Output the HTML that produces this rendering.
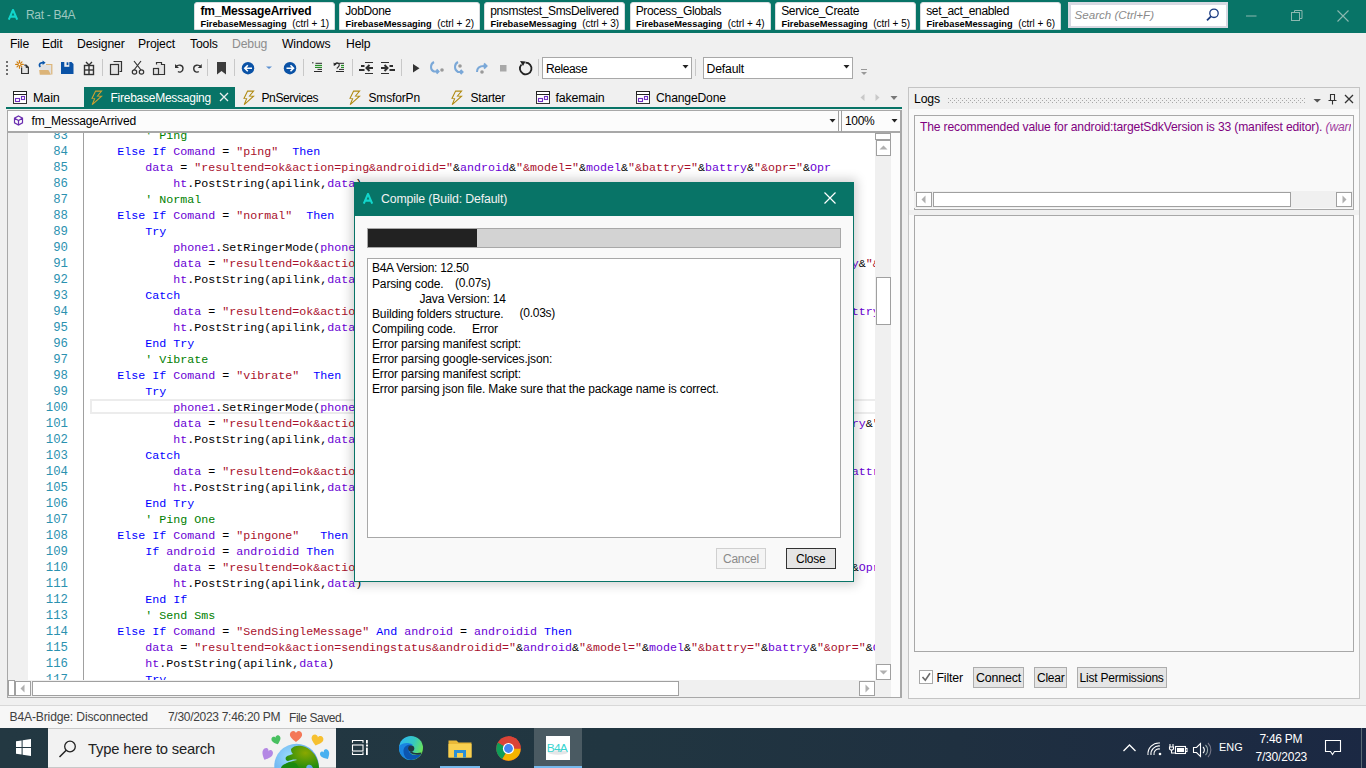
<!DOCTYPE html>
<html><head><meta charset="utf-8">
<style>
*{margin:0;padding:0;box-sizing:border-box}
html,body{width:1366px;height:768px;overflow:hidden;background:#f0f0f0;font-family:"Liberation Sans",sans-serif;font-size:11.6px;color:#000}
.a{position:absolute}
.t{position:absolute;white-space:pre;line-height:1}
#title{left:0;top:0;width:1366px;height:33px;background:#087467}
.ftab{position:absolute;top:2px;height:28px;background:#fff;border-radius:3px 3px 0 0;border:1px solid #d9dde0}
.ftab .l1{position:absolute;left:5.2px;top:2.3px;font-size:12px;letter-spacing:-0.35px;white-space:pre;line-height:1}
.ftab .l2{position:absolute;left:5.6px;top:15.7px;font-size:10px;white-space:pre;line-height:1}
.menu{position:absolute;top:38px;font-size:12.21px;letter-spacing:-0.155px;white-space:pre;line-height:1}
.sep{position:absolute;width:1px;background:#c8c8c8}
.dtab{position:absolute;top:91.9px;font-size:11.7px;white-space:pre;line-height:1}
.code{position:absolute;left:84px;top:133px;width:791px;height:547px;overflow:hidden;background:#fff}
.cl{position:absolute;left:5.3px;white-space:pre;font-family:"Liberation Mono",monospace;font-size:11.67px;line-height:16px;height:16px}
.ln{position:absolute;right:1px;width:40px;text-align:right;font-family:"Liberation Mono",monospace;font-size:12.3px;line-height:16px;color:#2b91af}
.k{color:#0000ff}.v{color:#6a00d4}.s{color:#a8102c}.c{color:#008000}
.sb{position:absolute;background:#fff;border:1px solid #a0a0a0}
</style></head><body>
<!-- TITLE BAR -->
<div id="title" class="a">
  <svg class="a" style="left:7px;top:9px" width="12" height="12"><path d="M1.8 10.6L6 0.9L10.2 10.6M3.3 7.6h5.4" fill="none" stroke="#12d6cc" stroke-width="2.1" stroke-linejoin="round"/></svg>
  <div class="t" style="left:26px;top:9px;font-size:12.0px;color:#9ec8c0;letter-spacing:-0.3px">Rat - B4A</div>
  <div class="ftab" style="left:194px;width:141px"><div class="l1" style="font-weight:700;font-size:12px;left:5.5px;top:1.9px;letter-spacing:-0.19px">fm_MessageArrived</div><div class="l2"><b style="font-size:9.27px">FirebaseMessaging</b>  (ctrl + 1)</div></div>
  <div class="ftab" style="left:339px;width:141px"><div class="l1">JobDone</div><div class="l2"><b style="font-size:9.27px">FirebaseMessaging</b>  (ctrl + 2)</div></div>
  <div class="ftab" style="left:484px;width:141px"><div class="l1">pnsmstest_SmsDelivered</div><div class="l2"><b style="font-size:9.27px">FirebaseMessaging</b>  (ctrl + 3)</div></div>
  <div class="ftab" style="left:629.5px;width:141px"><div class="l1">Process_Globals</div><div class="l2"><b style="font-size:9.27px">FirebaseMessaging</b>  (ctrl + 4)</div></div>
  <div class="ftab" style="left:775px;width:141px"><div class="l1">Service_Create</div><div class="l2"><b style="font-size:9.27px">FirebaseMessaging</b>  (ctrl + 5)</div></div>
  <div class="ftab" style="left:920px;width:141px"><div class="l1">set_act_enabled</div><div class="l2"><b style="font-size:9.27px">FirebaseMessaging</b>  (ctrl + 6)</div></div>
  <div class="a" style="left:1068px;top:2px;width:160px;height:26px;background:#fff;border:2px solid #d8d9e2;border-top-width:3px;border-left-width:3px"></div>
  <div class="t" style="left:1074.5px;top:8.88px;font-size:11.6px;font-style:italic;color:#8a8a8a">Search (Ctrl+F)</div>
</div>

<!-- MENU -->
<div class="menu" style="left:10px">File</div>
<div class="menu" style="left:42px">Edit</div>
<div class="menu" style="left:77px">Designer</div>
<div class="menu" style="left:138px">Project</div>
<div class="menu" style="left:190px">Tools</div>
<div class="menu" style="left:232px;color:#8d8d8d">Debug</div>
<div class="menu" style="left:282px">Windows</div>
<div class="menu" style="left:346px">Help</div>
<!-- TOOLBAR -->
<svg class="a" style="left:0;top:54px" width="540" height="30" viewBox="0 54 540 30">
  <g fill="#707070"><rect x="6" y="61" width="2" height="2"/><rect x="6" y="65" width="2" height="2"/><rect x="6" y="69" width="2" height="2"/><rect x="6" y="73" width="2" height="2"/></g>
  <!-- new -->
  <g stroke="#d07f10" stroke-width="1.2" stroke-linecap="round"><line x1="19.5" y1="60.6" x2="19.5" y2="68.2"/><line x1="15.7" y1="64.4" x2="23.3" y2="64.4"/><line x1="17" y1="61.9" x2="22" y2="66.9"/><line x1="22" y1="61.9" x2="17" y2="66.9"/></g>
  <circle cx="19.5" cy="64.4" r="1.3" fill="#fff" stroke="#d07f10" stroke-width="0.9"/>
  <path d="M21.6 67.5v6h6.8v-6.2l-2.3-2.2h-1.8" fill="#e4e4e4" stroke="#333" stroke-width="1.2"/>
  <path d="M26 65.2v2.3h2.3" fill="#333" stroke="#333" stroke-width="0.8"/>
  <!-- open -->
  <rect x="40" y="64.5" width="11.8" height="10" fill="#e2e2e2"/>
  <path d="M46 64.5h5.8v10" fill="none" stroke="#ddb578" stroke-width="1.2"/>
  <path d="M39.2 70h9.2l2.6 4.8h-11.2z" fill="#dcb478"/>
  <path d="M40.3 67c-1.5-1.5-1-3.8 1.2-4.2l2-0.2" fill="none" stroke="#0a56aa" stroke-width="1.7"/>
  <path d="M42.6 60.6l3 2.2-3 2.2z" fill="#0a56aa"/>
  <!-- save -->
  <path d="M61 62h10.5l2 2v10h-12.5z" fill="#0a52a6"/><rect x="64.3" y="62" width="5" height="4.8" fill="#f0f0f0"/><rect x="66.6" y="62.3" width="1.8" height="2.8" fill="#0a52a6"/>
  <!-- gift -->
  <g fill="none" stroke="#333" stroke-width="1.4"><rect x="84.5" y="65.5" width="9" height="9"/><line x1="89" y1="65" x2="89" y2="75"/><line x1="84" y1="70" x2="94" y2="70"/><path d="M86 62l3 3 3-3"/></g>
  <rect x="102" y="59" width="1" height="17" fill="#c8c8c8"/>
  <!-- copy -->
  <g fill="#e4e4e4" stroke="#333" stroke-width="1.2"><path d="M113.5 61.5h8v10h-2"/><rect x="110.5" y="64.5" width="8" height="10"/></g>
  <!-- cut -->
  <g fill="none" stroke="#333" stroke-width="1.2"><path d="M134 61l7 9M141 61l-7 9"/><circle cx="134.5" cy="72" r="2.2"/><circle cx="141.5" cy="72" r="2.2"/></g>
  <!-- paste -->
  <g fill="#e4e4e4" stroke="#333" stroke-width="1.2"><path d="M156.5 64.5v-2h5v2h3v10h-6"/><rect x="153.5" y="68.5" width="5" height="6"/></g>
  <!-- undo redo -->
  <g fill="none" stroke="#333" stroke-width="1.4"><path d="M176 66.5c2-2 7-2 7 2s-4 4-5 3"/><path d="M200.75 66.5c-2-2 -7-2 -7 2s4 4 5 3"/></g>
  <path d="M175 64v4h4z" fill="#333"/><path d="M201.75 64v4h-4z" fill="#333"/>
  <rect x="207" y="59" width="1" height="17" fill="#c8c8c8"/>
  <path d="M217 62h9v12.5l-4.5-3.5-4.5 3.5z" fill="#3c3c3c"/>
  <rect x="234" y="59" width="1" height="17" fill="#c8c8c8"/>
  <circle cx="248" cy="68.2" r="6.2" fill="#0a52a6"/><path d="M245 68.2h7M247.8 65.2l-3 3 3 3" stroke="#fff" stroke-width="1.6" fill="none"/>
  <path d="M266 66.5h6l-3 2.5z" fill="#5b8fd0"/>
  <circle cx="290" cy="68.2" r="6.2" fill="#0a52a6"/><path d="M286.5 68.2h7M290.5 65.2l3 3-3 3" stroke="#fff" stroke-width="1.6" fill="none"/>
  <rect x="303" y="59" width="1" height="17" fill="#c8c8c8"/>
  <!-- comment -->
  <g stroke="#2a2a2a" stroke-width="1"><line x1="312" y1="62.8" x2="313.5" y2="62.8"/><line x1="315.5" y1="63.3" x2="322" y2="63.3"/><line x1="317.5" y1="69.4" x2="322" y2="69.4"/><line x1="314" y1="71.5" x2="322" y2="71.5"/>
  <line x1="336" y1="63.3" x2="344" y2="63.3"/><line x1="339" y1="69.4" x2="344" y2="69.4"/><line x1="336" y1="71.5" x2="344" y2="71.5"/></g>
  <g stroke="#1c8a1c" stroke-width="1.1"><line x1="315" y1="65.4" x2="322" y2="65.4"/><line x1="315" y1="67.4" x2="322" y2="67.4"/><line x1="341" y1="65.4" x2="344" y2="65.4"/><line x1="341" y1="67.4" x2="344" y2="67.4"/></g>
  <path d="M334.8 64.2c1.5-2 4.5-1.5 4.5 0.8 0 1.5-1.5 2.5-2.5 3.5" fill="none" stroke="#2a2a2a" stroke-width="1.2"/><path d="M333.5 62.5l0.3 3.5 2.8-1.6z" fill="#2a2a2a"/>
  <rect x="352" y="59" width="1" height="17" fill="#c8c8c8"/>
  <!-- outdent/indent -->
  <g stroke="#2f2f2f" stroke-width="1"><line x1="365" y1="62.5" x2="373" y2="62.5"/><line x1="365" y1="73.5" x2="373" y2="73.5"/><line x1="381" y1="62.5" x2="389" y2="62.5"/><line x1="381" y1="73.5" x2="389" y2="73.5"/></g>
  <g stroke="#2f2f2f" stroke-width="2"><line x1="361" y1="66" x2="364.5" y2="66"/><line x1="359" y1="70" x2="364.5" y2="70"/><line x1="389.5" y1="66" x2="393" y2="66"/><line x1="389.5" y1="70" x2="395" y2="70"/>
  <path d="M373 68h-6M369.5 65l-3 3 3 3" fill="none"/><path d="M381 68h6M384.5 65l3 3-3 3" fill="none"/></g>
  <rect x="401" y="59" width="1" height="17" fill="#c8c8c8"/>
  <path d="M413 64v8.5l6.5-4.25z" fill="#333"/>
  <g stroke="#7aa8d8" stroke-width="2" fill="none"><path d="M434 62c-4 2-4 8 0 9.5h4"/><path d="M436.5 69.5l2 2-2 2"/><path d="M458 62c-4 2-4 8 0 10h4"/><path d="M460.5 70l2 2-2 2"/><path d="M477 72c0-4 2-6 7-6h2"/><path d="M484 63.5l2.5 2.5-2.5 2.5"/></g>
  <g fill="#9a9a9a"><circle cx="442" cy="70" r="1.8"/><circle cx="460" cy="66" r="1.8"/><circle cx="482" cy="72" r="1.8"/></g>
  <rect x="500" y="65" width="6.5" height="6.5" fill="#a8a8a8"/>
  <g fill="none" stroke="#222" stroke-width="1.8"><path d="M521.5 64.5a5.8 5.8 0 1 0 4-1.8"/></g><path d="M520 61l5.5 0.5-2.5 4.5z" fill="#222"/>
  <rect x="538" y="59" width="1" height="17" fill="#c8c8c8"/>
</svg>
<div class="a" style="left:542px;top:57px;width:150px;height:22px;background:#fff;border:1px solid #a8a8a8"></div>
<div class="t" style="left:546px;top:63px;font-size:12.0px;letter-spacing:-0.4px">Release</div>
<svg class="a" style="left:682px;top:65px" width="7" height="4"><path d="M0.5 0h6l-3 3.5z" fill="#222"/></svg>
<div class="sep" style="left:695px;top:59px;height:17px"></div>
<div class="a" style="left:703px;top:57px;width:150px;height:22px;background:#fff;border:1px solid #a8a8a8"></div>
<div class="t" style="left:706.5px;top:63px;font-size:12.21px;letter-spacing:-0.155px">Default</div>
<svg class="a" style="left:843px;top:65px" width="7" height="4"><path d="M0.5 0h6l-3 3.5z" fill="#222"/></svg>
<svg class="a" style="left:860px;top:68px" width="8" height="9"><rect x="1" y="1" width="6" height="1" fill="#999"/><path d="M1 4h6l-3 3z" fill="#999"/></svg>

<!-- DOC TABS -->
<svg class="a" style="left:0;top:84px" width="910" height="26" viewBox="0 84 910 26">
  <rect x="84" y="87" width="151" height="20" fill="#087467"/>
  <rect x="6" y="107" width="896" height="2" fill="#087467"/>
  <g transform="translate(0,0)"><rect x="13.5" y="91.5" width="13" height="12" fill="#fff" stroke="#333" stroke-width="1"/><rect x="13.5" y="91.5" width="13" height="3" fill="#fff" stroke="#222" stroke-width="1"/><rect x="15.5" y="98.5" width="4" height="3" fill="none" stroke="#7030c0" stroke-width="1.1"/><rect x="21.5" y="96.5" width="3" height="3" fill="none" stroke="#7030c0" stroke-width="1.1"/></g><g transform="translate(523,0)"><rect x="13.5" y="91.5" width="13" height="12" fill="#fff" stroke="#333" stroke-width="1"/><rect x="13.5" y="91.5" width="13" height="3" fill="#fff" stroke="#222" stroke-width="1"/><rect x="15.5" y="98.5" width="4" height="3" fill="none" stroke="#7030c0" stroke-width="1.1"/><rect x="21.5" y="96.5" width="3" height="3" fill="none" stroke="#7030c0" stroke-width="1.1"/></g><g transform="translate(623,0)"><rect x="13.5" y="91.5" width="13" height="12" fill="#fff" stroke="#333" stroke-width="1"/><rect x="13.5" y="91.5" width="13" height="3" fill="#fff" stroke="#222" stroke-width="1"/><rect x="15.5" y="98.5" width="4" height="3" fill="none" stroke="#7030c0" stroke-width="1.1"/><rect x="21.5" y="96.5" width="3" height="3" fill="none" stroke="#7030c0" stroke-width="1.1"/></g>
  <g fill="none" stroke="#b08a10" stroke-width="1.05" stroke-linejoin="miter">
    <path transform="translate(86,86)" d="M9.6 5.1L15.6 5.1L11.5 10L15.6 10.2L6.2 18.6L8.6 12.6L6 12.4Z" stroke="#d0a030"/>
    <path transform="translate(238,86)" d="M9.6 5.1L15.6 5.1L11.5 10L15.6 10.2L6.2 18.6L8.6 12.6L6 12.4Z"/>
    <path transform="translate(344,86)" d="M9.6 5.1L15.6 5.1L11.5 10L15.6 10.2L6.2 18.6L8.6 12.6L6 12.4Z"/>
    <path transform="translate(446,86)" d="M9.6 5.1L15.6 5.1L11.5 10L15.6 10.2L6.2 18.6L8.6 12.6L6 12.4Z"/>
  </g>
  <path d="M220 93l8 8M228 93l-8 8" stroke="#e8f0ee" stroke-width="1.3"/>
  <path d="M860.5 97.5l4-3.5v7z" fill="#c8c8c8"/><path d="M879.5 97.5l-4-3.5v7z" fill="#c8c8c8"/>
  <path d="M890.5 96h7l-3.5 4z" fill="#777"/>
</svg>
<div class="dtab" style="left:33px;font-size:12.62px;top:92px;letter-spacing:-0.16px">Main</div>
<div class="dtab" style="left:110.5px;font-size:12.0px;top:92px;color:#fff;letter-spacing:-0.25px">FirebaseMessaging</div>
<div class="dtab" style="left:261.5px;font-size:12.0px;top:92px;letter-spacing:-0.4px">PnServices</div>
<div class="dtab" style="left:368.5px;font-size:12.0px;top:92px;letter-spacing:-0.15px">SmsforPn</div>
<div class="dtab" style="left:470.5px;font-size:12.0px;top:92px;letter-spacing:-0.2px">Starter</div>
<div class="dtab" style="left:555.5px;font-size:12.41px;top:92px;letter-spacing:-0.155px">fakemain</div>
<div class="dtab" style="left:656px;font-size:12.11px;top:92px;letter-spacing:-0.155px">ChangeDone</div>
<!-- CODE PANEL -->
<div class="a" style="left:7px;top:110px;width:895px;height:588px;border:1px solid #a8a8a8;border-width:1px 2px 1px 1px;background:#fcfcfc"></div>
<div class="a" style="left:8px;top:111px;width:831px;height:21px;background:#fcfcfc;border-right:1px solid #a0a0a0"></div>
<div class="a" style="left:8px;top:131px;width:893px;height:2px;background:#a8a8a8"></div>
<svg class="a" style="left:13px;top:115px" width="11" height="11"><path d="M5.5 1l4 2.2v4.6l-4 2.2-4-2.2V3.2z M1.5 3.2l4 2.3 4-2.3 M5.5 5.5v4.5" fill="none" stroke="#6b2fb0" stroke-width="1.2"/></svg>
<div class="t" style="left:31.5px;top:115px;font-size:12.05px;letter-spacing:-0.155px">fm_MessageArrived</div>
<svg class="a" style="left:829px;top:119px" width="8" height="4"><path d="M0.5 0h6l-3 3.5z" fill="#222"/></svg>
<div class="a" style="left:841px;top:110px;width:1px;height:22px;background:#a0a0a0"></div>
<div class="t" style="left:845px;top:115px;font-size:12.0px;letter-spacing:-0.35px">100%</div>
<svg class="a" style="left:891px;top:119px" width="8" height="4"><path d="M0.5 0h6l-3 3.5z" fill="#222"/></svg>
<div class="a" style="left:8px;top:133px;width:20px;height:547px;background:#f0f0f0"></div>
<div class="a" style="left:28px;top:133px;width:56px;height:547px;background:#fff"></div>
<div class="a" style="left:83px;top:133px;width:1px;height:547px;background:#a0a0a0"></div>
<!-- v scroll -->
<div class="a" style="left:875px;top:133px;width:16px;height:547px;background:#f0f0f0"></div>
<div class="sb" style="left:875px;top:133px;width:16px;height:7px"></div>
<div class="sb" style="left:876px;top:140px;width:15px;height:16px"></div>
<svg class="a" style="left:879px;top:145px" width="9" height="5"><path d="M0.5 4.5l4-4 4 4z" fill="#b0b0b0"/></svg>
<div class="sb" style="left:876px;top:277px;width:15px;height:48px"></div>
<div class="sb" style="left:876px;top:664px;width:15px;height:16px"></div>
<svg class="a" style="left:879px;top:670px" width="9" height="5"><path d="M0.5 0.5l4 4 4-4z" fill="#b0b0b0"/></svg>
<!-- h scroll -->
<div class="a" style="left:8px;top:680px;width:883px;height:17px;background:#f0f0f0"></div>
<div class="sb" style="left:8px;top:680px;width:7px;height:16px"></div>
<div class="sb" style="left:15px;top:681px;width:16px;height:15px"></div>
<svg class="a" style="left:20px;top:684px" width="5" height="9"><path d="M4.5 0.5l-4 4 4 4z" fill="#b0b0b0"/></svg>
<div class="sb" style="left:32px;top:681px;width:647px;height:15px"></div>
<div class="sb" style="left:859px;top:681px;width:16px;height:15px"></div>
<svg class="a" style="left:865px;top:684px" width="5" height="9"><path d="M0.5 0.5l4 4-4 4z" fill="#b0b0b0"/></svg>
<!-- CODE -->
<div class="code">
<div class="a" style="left:5.5px;top:266px;width:786px;height:15px;border:2px solid #ececec;border-right:none"></div>
<div class="cl" style="top:-5px">        <span class="c">&#x27; Ping</span></div>
<div class="cl" style="top:11px">    <span class="k">Else If</span> <span class="v">Comand</span> = <span class="s">&quot;ping&quot;</span>  <span class="k">Then</span></div>
<div class="cl" style="top:27px">        <span class="v">data</span> = <span class="s">&quot;resultend=ok&amp;action=ping&amp;androidid=&quot;</span>&amp;<span class="v">android</span>&amp;<span class="s">&quot;&amp;model=&quot;</span>&amp;<span class="v">model</span>&amp;<span class="s">&quot;&amp;battry=&quot;</span>&amp;<span class="v">battry</span>&amp;<span class="s">&quot;&amp;opr=&quot;</span>&amp;<span class="v">Opr</span></div>
<div class="cl" style="top:43px">            <span class="v">ht</span>.PostString(apilink,<span class="v">data</span>)</div>
<div class="cl" style="top:59px">        <span class="c">&#x27; Normal</span></div>
<div class="cl" style="top:75px">    <span class="k">Else If</span> <span class="v">Comand</span> = <span class="s">&quot;normal&quot;</span>  <span class="k">Then</span></div>
<div class="cl" style="top:91px">        <span class="k">Try</span></div>
<div class="cl" style="top:107px">            <span class="v">phone1</span>.SetRingerMode(<span class="v">phone</span>1.RINGER_NORMAL)</div>
<div class="cl" style="top:123px">            <span class="v">data</span> = <span class="s">&quot;resultend=ok&amp;action=normal&amp;ringer=ok&amp;androidid=&quot;</span>&amp;<span class="v">android</span>&amp;<span class="s">&quot;&amp;model=&quot;</span>&amp;<span class="v">model</span>&amp;<span class="s">&quot;&amp;battry=&quot;</span>&amp;<span class="v">battry</span>&amp;<span class="s">&quot;&amp;opr=&quot;</span>&amp;<span class="v">Opr</span></div>
<div class="cl" style="top:139px">            <span class="v">ht</span>.PostString(apilink,<span class="v">data</span>)</div>
<div class="cl" style="top:155px">        <span class="k">Catch</span></div>
<div class="cl" style="top:171px">            <span class="v">data</span> = <span class="s">&quot;resultend=ok&amp;action=normal&amp;ringer=error&amp;androidid=&quot;</span>&amp;<span class="v">android</span>&amp;<span class="s">&quot;&amp;model=&quot;</span>&amp;<span class="v">model</span>&amp;<span class="s">&quot;&amp;battry=&quot;</span>&amp;<span class="v">battry</span>&amp;<span class="s">&quot;&amp;opr=&quot;</span>&amp;<span class="v">Opr</span></div>
<div class="cl" style="top:187px">            <span class="v">ht</span>.PostString(apilink,<span class="v">data</span>)</div>
<div class="cl" style="top:203px">        <span class="k">End Try</span></div>
<div class="cl" style="top:219px">        <span class="c">&#x27; Vibrate</span></div>
<div class="cl" style="top:235px">    <span class="k">Else If</span> <span class="v">Comand</span> = <span class="s">&quot;vibrate&quot;</span>  <span class="k">Then</span></div>
<div class="cl" style="top:251px">        <span class="k">Try</span></div>
<div class="cl" style="top:267px">            <span class="v">phone1</span>.SetRingerMode(<span class="v">phone</span>1.RINGER_VIBRATE)</div>
<div class="cl" style="top:283px">            <span class="v">data</span> = <span class="s">&quot;resultend=ok&amp;action=vibrate&amp;ringer=ok&amp;androidid=&quot;</span>&amp;<span class="v">android</span>&amp;<span class="s">&quot;&amp;model=&quot;</span>&amp;<span class="v">model</span>&amp;<span class="s">&quot;&amp;battry=&quot;</span>&amp;<span class="v">battry</span>&amp;<span class="s">&quot;&amp;opr=&quot;</span>&amp;<span class="v">Opr</span></div>
<div class="cl" style="top:299px">            <span class="v">ht</span>.PostString(apilink,<span class="v">data</span>)</div>
<div class="cl" style="top:315px">        <span class="k">Catch</span></div>
<div class="cl" style="top:331px">            <span class="v">data</span> = <span class="s">&quot;resultend=ok&amp;action=vibrate&amp;ringer=error&amp;androidid=&quot;</span>&amp;<span class="v">android</span>&amp;<span class="s">&quot;&amp;model=&quot;</span>&amp;<span class="v">model</span>&amp;<span class="s">&quot;&amp;battry=&quot;</span>&amp;<span class="v">battry</span>&amp;<span class="s">&quot;&amp;opr=&quot;</span>&amp;<span class="v">Opr</span></div>
<div class="cl" style="top:347px">            <span class="v">ht</span>.PostString(apilink,<span class="v">data</span>)</div>
<div class="cl" style="top:363px">        <span class="k">End Try</span></div>
<div class="cl" style="top:379px">        <span class="c">&#x27; Ping One</span></div>
<div class="cl" style="top:395px">    <span class="k">Else If</span> <span class="v">Comand</span> = <span class="s">&quot;pingone&quot;</span>   <span class="k">Then</span></div>
<div class="cl" style="top:411px">        <span class="k">If</span> <span class="v">android</span> = <span class="v">androidid</span> <span class="k">Then</span></div>
<div class="cl" style="top:427px">            <span class="v">data</span> = <span class="s">&quot;resultend=ok&amp;action=pingone&amp;androidid=&quot;</span>&amp;<span class="v">android</span>&amp;<span class="s">&quot;&amp;model=&quot;</span>&amp;<span class="v">model</span>&amp;<span class="s">&quot;&amp;battry=&quot;</span>&amp;<span class="v">battry</span>&amp;<span class="s">&quot;&amp;opr=&quot;</span>&amp;<span class="v">Opr</span></div>
<div class="cl" style="top:443px">            <span class="v">ht</span>.PostString(apilink,<span class="v">data</span>)</div>
<div class="cl" style="top:459px">        <span class="k">End If</span></div>
<div class="cl" style="top:475px">        <span class="c">&#x27; Send Sms</span></div>
<div class="cl" style="top:491px">    <span class="k">Else If</span> <span class="v">Comand</span> = <span class="s">&quot;SendSingleMessage&quot;</span> <span class="k">And</span> <span class="v">android</span> = <span class="v">androidid</span> <span class="k">Then</span></div>
<div class="cl" style="top:507px">        <span class="v">data</span> = <span class="s">&quot;resultend=ok&amp;action=sendingstatus&amp;androidid=&quot;</span>&amp;<span class="v">android</span>&amp;<span class="s">&quot;&amp;model=&quot;</span>&amp;<span class="v">model</span>&amp;<span class="s">&quot;&amp;battry=&quot;</span>&amp;<span class="v">battry</span>&amp;<span class="s">&quot;&amp;opr=&quot;</span>&amp;<span class="v">Opr</span></div>
<div class="cl" style="top:523px">        <span class="v">ht</span>.PostString(apilink,<span class="v">data</span>)</div>
<div class="cl" style="top:539px">        <span class="k">Try</span></div>
</div>
<div class="a" style="left:28px;top:133px;width:41px;height:547px;overflow:hidden">
<div class="ln" style="top:-5px">83</div>
<div class="ln" style="top:11px">84</div>
<div class="ln" style="top:27px">85</div>
<div class="ln" style="top:43px">86</div>
<div class="ln" style="top:59px">87</div>
<div class="ln" style="top:75px">88</div>
<div class="ln" style="top:91px">89</div>
<div class="ln" style="top:107px">90</div>
<div class="ln" style="top:123px">91</div>
<div class="ln" style="top:139px">92</div>
<div class="ln" style="top:155px">93</div>
<div class="ln" style="top:171px">94</div>
<div class="ln" style="top:187px">95</div>
<div class="ln" style="top:203px">96</div>
<div class="ln" style="top:219px">97</div>
<div class="ln" style="top:235px">98</div>
<div class="ln" style="top:251px">99</div>
<div class="ln" style="top:267px">100</div>
<div class="ln" style="top:283px">101</div>
<div class="ln" style="top:299px">102</div>
<div class="ln" style="top:315px">103</div>
<div class="ln" style="top:331px">104</div>
<div class="ln" style="top:347px">105</div>
<div class="ln" style="top:363px">106</div>
<div class="ln" style="top:379px">107</div>
<div class="ln" style="top:395px">108</div>
<div class="ln" style="top:411px">109</div>
<div class="ln" style="top:427px">110</div>
<div class="ln" style="top:443px">111</div>
<div class="ln" style="top:459px">112</div>
<div class="ln" style="top:475px">113</div>
<div class="ln" style="top:491px">114</div>
<div class="ln" style="top:507px">115</div>
<div class="ln" style="top:523px">116</div>
<div class="ln" style="top:539px">117</div>
</div>
<!-- /CODE -->

<!-- LOGS -->
<div class="a" style="left:908px;top:87px;width:452px;height:612px;border:1px solid #c4c4c4;background:#f9f9f9"></div>
<div class="a" style="left:909px;top:88px;width:450px;height:21px;background:#f0f0f0"></div>
<div class="t" style="left:914px;top:93px;font-size:12.26px;letter-spacing:-0.155px">Logs</div>
<svg class="a" style="left:946px;top:96px" width="360" height="8"><defs><pattern id="dots" width="4" height="4" patternUnits="userSpaceOnUse"><rect x="0" y="0" width="1" height="1" fill="#a8a8a8"/><rect x="2" y="2" width="1" height="1" fill="#a8a8a8"/></pattern></defs><rect x="2" y="1" width="357" height="6" fill="url(#dots)"/></svg>
<svg class="a" style="left:1310px;top:92px" width="48" height="14">
  <path d="M3.5 7h7.5l-3.75 3.5z" fill="#555"/>
  <g fill="none" stroke="#333" stroke-width="1.1"><path d="M20.5 2.5h4v6h-4z M18.5 8.5h8 M22.5 8.5v4"/></g>
  <path d="M35 3l8 8M43 3l-8 8" stroke="#333" stroke-width="1.3"/>
</svg>
<div class="a" style="left:914px;top:115px;width:440px;height:95px;border:1px solid #a8a8a8;background:#f9f9f9"></div>
<div class="a" style="left:914px;top:116px;width:437px;height:74px;overflow:hidden"><div class="t" style="left:6px;top:5px;font-size:12.11px;color:#800080;letter-spacing:-0.155px">The recommended value for android:targetSdkVersion is 33 (manifest editor). <i style="color:#a040a0">(warning)</i></div></div>
<div class="a" style="left:914px;top:191px;width:439px;height:17px;background:#f0f0f0"></div>
<div class="sb" style="left:916px;top:192px;width:16px;height:15px"></div>
<svg class="a" style="left:921px;top:195px" width="5" height="9"><path d="M4.5 0.5l-4 4 4 4z" fill="#b0b0b0"/></svg>
<div class="sb" style="left:933px;top:192px;width:358px;height:15px"></div>
<div class="sb" style="left:1336px;top:192px;width:16px;height:15px"></div>
<svg class="a" style="left:1342px;top:195px" width="5" height="9"><path d="M0.5 0.5l4 4-4 4z" fill="#b0b0b0"/></svg>
<div class="a" style="left:909px;top:210px;width:450px;height:5px;background:#f0f0f0"></div>
<div class="a" style="left:914px;top:215px;width:440px;height:437px;border:1px solid #a8a8a8;background:#f9f9f9"></div>
<div class="a" style="left:919px;top:670px;width:14px;height:14px;border:1px solid #a8a8a8;background:#fff"></div>
<svg class="a" style="left:920px;top:671px" width="12" height="12"><path d="M2.5 6l2.8 3.3 4.7-7" fill="none" stroke="#6a6a6a" stroke-width="1.6"/></svg>
<div class="t" style="left:936.5px;top:672px;font-size:12.31px;letter-spacing:-0.155px">Filter</div>
<div class="a" style="left:973px;top:667px;width:51px;height:21px;border:1px solid #adadad;background:#e5e5e5"></div>
<div class="t" style="left:976px;top:672px;font-size:12.41px;letter-spacing:-0.155px">Connect</div>
<div class="a" style="left:1034px;top:667px;width:33px;height:21px;border:1px solid #adadad;background:#e5e5e5"></div>
<div class="t" style="left:1037px;top:672px;font-size:12.0px;letter-spacing:-0.25px">Clear</div>
<div class="a" style="left:1077px;top:667px;width:90px;height:21px;border:1px solid #adadad;background:#e5e5e5"></div>
<div class="t" style="left:1079.5px;top:672px;font-size:12.0px;letter-spacing:-0.2px">List Permissions</div>
<!-- STATUS -->
<div class="a" style="left:0;top:705px;width:1366px;height:1px;background:#d8d8d8"></div>
<div class="a" style="left:0;top:706px;width:1366px;height:22px;background:#f7f7f7"></div>
<div class="t" style="left:9.5px;top:711px;font-size:12.11px;color:#404040;letter-spacing:-0.155px">B4A-Bridge: Disconnected</div>
<div class="t" style="left:168px;top:711px;font-size:12.0px;color:#404040;letter-spacing:-0.3px">7/30/2023 7:46:20 PM</div>
<div class="t" style="left:289px;top:712px;font-size:12.0px;color:#404040;letter-spacing:-0.45px">File Saved.</div>
<!-- TASKBAR -->
<div class="a" style="left:0;top:728px;width:1366px;height:40px;background:linear-gradient(90deg,#233842 0%,#213641 45%,#1f3040 70%,#1b2843 100%)"></div>
<svg class="a" style="left:15px;top:739px" width="18" height="18"><path d="M1 2.2l5.6-0.8v6.5h-5.6z M7.6 1.2l8.4-1.2v7.9h-8.4z M1 9h5.6v6.6l-5.6-0.8z M7.6 9h8.4v8l-8.4-1.2z" fill="#fff"/></svg>
<div class="a" style="left:48px;top:728px;width:288px;height:40px;background:#f2f2f2;border:1px solid #c8c8c8;border-width:1px 0 1px 0"></div>
<svg class="a" style="left:58px;top:739px" width="20" height="20"><circle cx="12" cy="7.5" r="5.3" fill="none" stroke="#222" stroke-width="1.3"/><path d="M8.2 11.3L1.5 18" stroke="#222" stroke-width="1.5"/></svg>
<div class="t" style="left:88px;top:742px;font-size:14.77px;color:#222;letter-spacing:-0.185px">Type here to search</div>

<!-- globe + hearts -->
<svg class="a" style="left:255px;top:728px" width="80" height="40" viewBox="255 728 80 40">
  <defs><radialGradient id="gl" cx="0.35" cy="0.3" r="0.8"><stop offset="0" stop-color="#9adcfc"/><stop offset="0.6" stop-color="#6ab0f0"/><stop offset="1" stop-color="#4a70e0"/></radialGradient>
  <radialGradient id="gr" cx="0.6" cy="0.3" r="0.7"><stop offset="0" stop-color="#8aa800"/><stop offset="1" stop-color="#1a8a10"/></radialGradient></defs>
  <circle cx="296.5" cy="766" r="22.2" fill="url(#gl)"/>
  <path d="M291 749c2-3 7-4 11-3 5 1 11 5 14 11 2 4 3 8 3 11h-6c-1-3-3-4-5-3-2 1-2 3-1 5h-14c-3-1-6-3-8-5 2-3 6-3 8-4l4-1c-2-1-6 0-9 1-2 0-3-2-2-4 2-2 5-2 7-3-1-1-2-2-2-5z" fill="url(#gr)"/>
  <path d="M283 765c3-2 8-3 12-2 3 1 2 4 5 5h-19c0-1 1-2 2-3z" fill="#1a8a10"/>
  <path transform="translate(296,736.6) rotate(0) scale(6.1,5.6)" d="M0 0.95C-0.35 0.65-1 0.15-1-0.35C-1-0.8-0.7-1-0.45-1C-0.2-1 0-0.8 0-0.6C0-0.8 0.2-1 0.45-1C0.7-1 1-0.8 1-0.35C1 0.15 0.35 0.65 0 0.95Z" fill="#f47858"/>
  <path transform="translate(276.5,740.3) rotate(-20) scale(4.6,4.4)" d="M0 0.95C-0.35 0.65-1 0.15-1-0.35C-1-0.8-0.7-1-0.45-1C-0.2-1 0-0.8 0-0.6C0-0.8 0.2-1 0.45-1C0.7-1 1-0.8 1-0.35C1 0.15 0.35 0.65 0 0.95Z" fill="#48c060"/>
  <path transform="translate(317,740.6) rotate(15) scale(6.0,5.4)" d="M0 0.95C-0.35 0.65-1 0.15-1-0.35C-1-0.8-0.7-1-0.45-1C-0.2-1 0-0.8 0-0.6C0-0.8 0.2-1 0.45-1C0.7-1 1-0.8 1-0.35C1 0.15 0.35 0.65 0 0.95Z" fill="#f6c030"/>
  <path transform="translate(266.8,754.7) rotate(25) scale(5.3,6.0)" d="M0 0.95C-0.35 0.65-1 0.15-1-0.35C-1-0.8-0.7-1-0.45-1C-0.2-1 0-0.8 0-0.6C0-0.8 0.2-1 0.45-1C0.7-1 1-0.8 1-0.35C1 0.15 0.35 0.65 0 0.95Z" fill="#b488e4"/>
  <path transform="translate(325.5,755) rotate(-30) scale(4.7,5.0)" d="M0 0.95C-0.35 0.65-1 0.15-1-0.35C-1-0.8-0.7-1-0.45-1C-0.2-1 0-0.8 0-0.6C0-0.8 0.2-1 0.45-1C0.7-1 1-0.8 1-0.35C1 0.15 0.35 0.65 0 0.95Z" fill="#48b0f0"/>
</svg>
<!-- task view -->
<svg class="a" style="left:350px;top:738px" width="20" height="19" viewBox="350 738 20 19">
  <g fill="none" stroke="#fff" stroke-width="1.1"><path d="M352.5 742.8v-2.3h10.5v2.3"/><path d="M352.5 752.3v2.2h10.5v-2.2"/><rect x="352.5" y="745" width="10.5" height="6"/></g>
  <rect x="366" y="740" width="1.8" height="3.5" fill="#fff"/><rect x="366" y="744.5" width="2" height="2" fill="#fff"/><rect x="366" y="747.6" width="1.8" height="7.4" fill="#fff"/>
</svg>
<!-- edge -->
<svg class="a" style="left:399px;top:736px" width="24" height="24" viewBox="0 0 24 24">
  <defs><linearGradient id="eg" x1="0" y1="0.2" x2="1" y2="0.6"><stop offset="0" stop-color="#2cb8f4"/><stop offset="0.55" stop-color="#36c8c0"/><stop offset="1" stop-color="#6ee650"/></linearGradient>
  <clipPath id="ec"><circle cx="12" cy="12" r="12"/></clipPath></defs>
  <g clip-path="url(#ec)">
    <rect x="0" y="0" width="24" height="24" fill="url(#eg)"/>
    <path d="M-1 11C3 6.5 9 6 13.5 8.5L10 25H-1Z" fill="#1a84e0"/>
    <path d="M4.5 15C4.5 10.5 8.5 8 12.5 9C10 10.5 9 12.5 9.5 14.5C10.5 18.5 16 20.5 22.5 18C20 22 16 24 12 24C7.5 24 4.5 20 4.5 15Z" fill="#0c56b0"/>
    <circle cx="12.2" cy="12.6" r="3.1" fill="#213641"/>
    <path d="M12 15.2C14.5 17 18.5 17.6 22.5 16.6L22 18.2C18 19.4 14 18.8 11 16.6Z" fill="#213641"/>
  </g>
</svg>
<!-- explorer -->
<svg class="a" style="left:448px;top:738px" width="24" height="20">
  <path d="M0.5 2.5h8l2 2h13v15h-23z" fill="#e8b838"/>
  <rect x="0.5" y="6" width="23" height="13.5" fill="#f8d050"/>
  <rect x="6" y="12" width="12" height="7.5" fill="#2a90d8"/><rect x="9" y="15" width="6" height="4.5" fill="#f8d050"/>
</svg>
<div class="a" style="left:440px;top:766px;width:40px;height:2px;background:#76b9ed"></div>
<!-- chrome -->
<svg class="a" style="left:496px;top:736px" width="25" height="25">
  <circle cx="12.5" cy="12.5" r="12.2" fill="#db4437"/>
  <path d="M12.5 12.5L1.9 6.4A12.2 12.2 0 0 0 6.4 23.1z" fill="#0f9d58"/>
  <path d="M12.5 12.5L6.4 23.1A12.2 12.2 0 0 0 24.7 12.5z" fill="#f4b400"/>
  <path d="M12.5 12.5h12.2A12.2 12.2 0 0 0 12.5 0.3L1.9 6.4z" fill="#db4437"/>
  <circle cx="12.5" cy="12.5" r="5.6" fill="#fff"/><circle cx="12.5" cy="12.5" r="4.4" fill="#4285f4"/>
</svg>
<!-- b4a -->
<div class="a" style="left:534px;top:728px;width:48px;height:40px;background:#4a5a62"></div>
<div class="a" style="left:534px;top:766px;width:48px;height:2px;background:#76b9ed"></div>
<div class="a" style="left:546px;top:736px;width:24px;height:24px;background:#fff"></div>
<svg class="a" style="left:546px;top:736px" width="24" height="24"><ellipse cx="12" cy="16.5" rx="10" ry="2.2" fill="#e4e6e8"/><text x="0.8" y="16.4" font-family="Liberation Sans" font-size="12px" fill="#38d4d0" letter-spacing="-0.9" transform="scale(1,0.9)" style="transform-origin:0 16px">B4A</text></svg>
<!-- tray -->
<svg class="a" style="left:1120px;top:738px" width="100" height="22">
  <path d="M3.5 13l6-6 6 6" fill="none" stroke="#fff" stroke-width="1.3"/>
  <g fill="none" stroke="#fff" stroke-width="1.1"><path d="M28 17a11 11 0 0 1 12-12"/><path d="M31 17a8 8 0 0 1 9-9"/><path d="M34 17a5 5 0 0 1 6-6"/></g><circle cx="40" cy="16" r="1.3" fill="#fff"/>
  <g fill="none" stroke="#fff" stroke-width="1.1"><rect x="55.5" y="8.5" width="10" height="7"/><rect x="65.5" y="10.5" width="1.5" height="3"/><path d="M50 6v3M53 6v3M49.5 9h4v2l-1 1h-2l-1-1z M51.5 12v3h4"/></g><rect x="57" y="10" width="7" height="4" fill="#fff"/>
  <g fill="none" stroke="#fff" stroke-width="1.1"><path d="M73.5 9.5h3l4-4v13l-4-4h-3z"/><path d="M83 9a4 4 0 0 1 0 6"/><path d="M85.5 7a7 7 0 0 1 0 10" stroke="#9aa"/><path d="M88 5a10 10 0 0 1 0 14" stroke="#778"/></g>
</svg>
<div class="t" style="left:1219px;top:742.47px;font-size:10.9px;color:#fff">ENG</div>
<div class="t" style="left:1259.5px;top:733px;font-size:12.0px;color:#fff;letter-spacing:-0.3px">7:46 PM</div>
<div class="t" style="left:1255.5px;top:751px;font-size:12.0px;color:#fff;letter-spacing:-0.2px">7/30/2023</div>
<svg class="a" style="left:1324px;top:739px" width="18" height="18"><path d="M1.5 1.5h15v11h-6l-2 3-2-3h-5z" fill="none" stroke="#fff" stroke-width="1.1"/></svg>
<div class="a" style="left:1361px;top:728px;width:1px;height:40px;background:#5a6a74"></div>
<!-- window controls -->
<svg class="a" style="left:1240px;top:5px" width="120" height="22">
  <line x1="6" y1="11" x2="16.5" y2="11" stroke="#8cb8b0" stroke-width="1"/>
  <g fill="none" stroke="#8cb8b0" stroke-width="1"><rect x="51.5" y="7.5" width="8" height="8"/><path d="M54.5 7.5v-2h7.5v8h-2.5"/></g>
  <path d="M97.5 5.5l11 11M108.5 5.5l-11 11" stroke="#8cb8b0" stroke-width="1.1"/>
</svg>
<svg class="a" style="left:1205px;top:8px" width="16" height="14"><circle cx="9" cy="5.3" r="4.2" fill="none" stroke="#1a3a80" stroke-width="1.3"/><path d="M6 8.3L2 12.3" stroke="#1a3a80" stroke-width="1.8"/></svg>
<!-- DIALOG -->
<div class="a" style="left:346px;top:175px;width:516px;height:416px;box-shadow:0 0 10px 3px rgba(0,0,0,0.18);left:354px;top:182px;width:500px;height:400px"></div>
<div class="a" style="left:354px;top:182px;width:500px;height:400px;background:#f9f9f9;border:1px solid #087467"></div>
<div class="a" style="left:354px;top:182px;width:500px;height:34px;background:#087467"></div>
<svg class="a" style="left:362px;top:193px" width="12" height="12"><path d="M1.8 10.6L6 0.9L10.2 10.6M3.3 7.6h5.4" fill="none" stroke="#12d6cc" stroke-width="2.1" stroke-linejoin="round"/></svg>
<div class="t" style="left:381px;top:193px;font-size:12.31px;color:#f2f2f2;letter-spacing:-0.155px">Compile (Build: Default)</div>
<svg class="a" style="left:823px;top:191px" width="14" height="14"><path d="M1.5 1.5l11 11M12.5 1.5l-11 11" stroke="#fff" stroke-width="1.2"/></svg>
<div class="a" style="left:367px;top:228px;width:474px;height:20px;background:#d3d3d3;border:1px solid #a8a8a8"></div>
<div class="a" style="left:368px;top:229px;width:109px;height:18px;background:#222"></div>
<div class="a" style="left:367px;top:258px;width:474px;height:280px;background:#fff;border:1px solid #a8a8a8"></div>
<div class="t" style="left:372px;top:262px;font-size:12.0px;letter-spacing:-0.3px">B4A Version: 12.50</div>
<div class="t" style="left:372px;top:278px;font-size:12.0px;letter-spacing:-0.15px">Parsing code.</div>
<div class="t" style="left:455px;top:277px;font-size:12.0px;letter-spacing:-0.25px">(0.07s)</div>
<div class="t" style="left:419.5px;top:293px;font-size:12.0px;letter-spacing:-0.15px">Java Version: 14</div>
<div class="t" style="left:372px;top:308px;font-size:12.0px;letter-spacing:-0.15px">Building folders structure.</div>
<div class="t" style="left:519.5px;top:307px;font-size:12.0px;letter-spacing:-0.25px">(0.03s)</div>
<div class="t" style="left:372px;top:323px;font-size:12.0px;letter-spacing:-0.15px">Compiling code.</div>
<div class="t" style="left:472px;top:323px;font-size:12.0px;letter-spacing:-0.15px">Error</div>
<div class="t" style="left:372px;top:338px;font-size:12.0px;letter-spacing:-0.15px">Error parsing manifest script:</div>
<div class="t" style="left:372px;top:353px;font-size:12.0px;letter-spacing:-0.15px">Error parsing google-services.json:</div>
<div class="t" style="left:372px;top:368px;font-size:12.0px;letter-spacing:-0.15px">Error parsing manifest script:</div>
<div class="t" style="left:372px;top:383px;font-size:12.0px;letter-spacing:-0.15px">Error parsing json file. Make sure that the package name is correct.</div>
<div class="a" style="left:716px;top:548px;width:50px;height:21px;background:#f4f4f4;border:1px solid #d0d0d0"></div>
<div class="t" style="left:723px;top:553px;font-size:12.0px;color:#8a8a8a;letter-spacing:-0.25px">Cancel</div>
<div class="a" style="left:786px;top:548px;width:50px;height:21px;background:#e5e5e5;border:1px solid #333"></div>
<div class="t" style="left:796px;top:553px;font-size:12.0px;letter-spacing:-0.25px">Close</div>
</body></html>
